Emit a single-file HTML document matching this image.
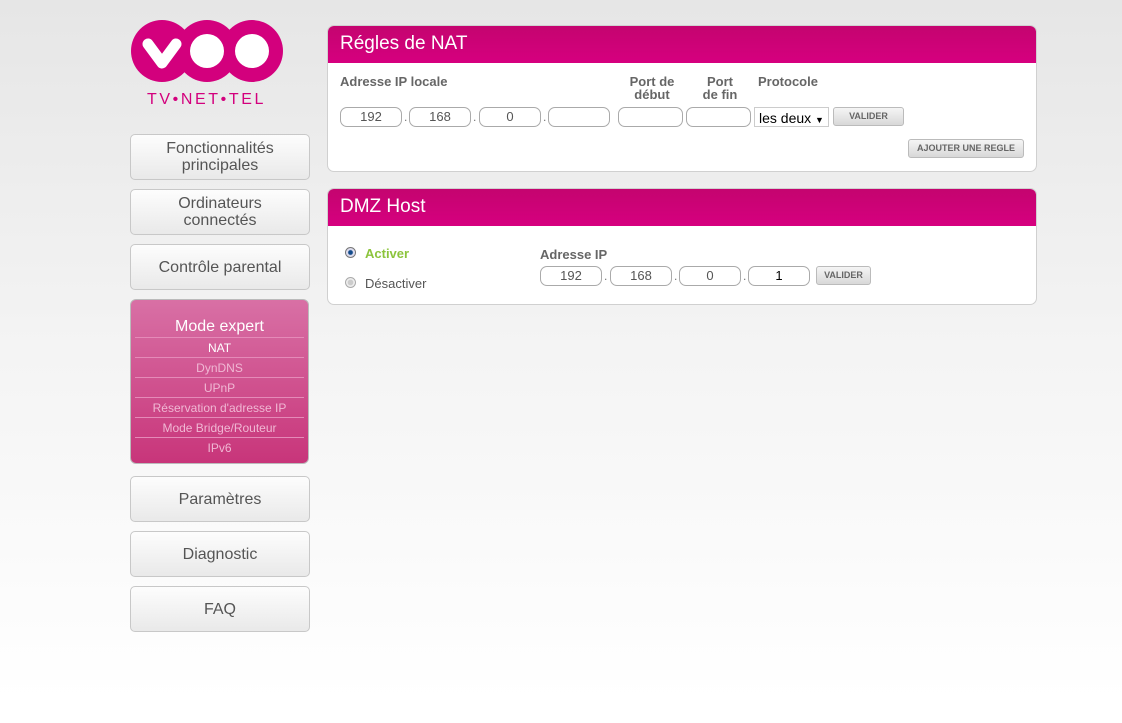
<!DOCTYPE html>
<html><head><meta charset="utf-8"><style>
*{box-sizing:border-box;margin:0;padding:0}
body{width:1122px;height:723px;overflow:hidden;font-family:"Liberation Sans",Arial,sans-serif;background:linear-gradient(#e6e6e6 0,#f4f4f4 350px,#fff 700px);position:relative}
.a{position:absolute}
.nav{position:absolute;left:130px;width:180px;height:46px;border:1px solid #c8c8c8;border-radius:5px;background:linear-gradient(#fdfdfd,#e9e9e9);color:#555;font-size:16px;text-align:center;display:flex;align-items:center;justify-content:center;line-height:17px}
.me{position:absolute;left:130px;top:299px;width:179px;height:165px;border-radius:6px;background:linear-gradient(#d870a5,#c8357a);border:1px solid #bbb;text-align:center;color:#f0b8d4;font-size:12px}
.me div{height:20px;line-height:20px;border-top:1px solid #e58ab8;margin:0 4px}
.panel{position:absolute;left:327px;width:710px;background:#fff;border:1px solid #d0d0d0;border-radius:7px;overflow:hidden}
.hd{height:37px;background:linear-gradient(#c4046f,#d6007f);color:#fff;font-size:19px;padding:7px 12px}
.lb{position:absolute;color:#666;font-weight:bold;font-size:13px;text-align:center;line-height:13px}
.in{position:absolute;height:20px;border:1px solid #aaa;border-radius:7px;background:#fff;font-size:13px;color:#555;text-align:center;line-height:18px}
.dot{position:absolute;font-size:12px;color:#777}
.btn{position:absolute;height:19px;border:1px solid #bbb;border-radius:3px;background:linear-gradient(#f5f5f5,#d8d8d8);font-size:9px;font-weight:bold;color:#666;text-align:center;line-height:17px}
</style></head><body>
<svg class="a" style="left:128px;top:18px" width="158" height="68" viewBox="0 0 158 68">
<g fill="#d3007d"><circle cx="34" cy="33" r="31"/><circle cx="79" cy="33" r="31"/><circle cx="124" cy="33" r="31"/></g>
<g fill="#fff"><circle cx="79" cy="33" r="17"/><circle cx="124" cy="33" r="17"/></g>
<path d="M20 26 L34 45 L48 26" stroke="#fff" stroke-width="11" fill="none" stroke-linecap="round" stroke-linejoin="round"/>
</svg>
<div class="a" style="left:147px;top:91px;color:#d3007d;font-size:16px;letter-spacing:2.6px">TV•NET•TEL</div>
<div class="nav" style="top:134px">Fonctionnalités<br>principales</div>
<div class="nav" style="top:189px">Ordinateurs<br>connectés</div>
<div class="nav" style="top:244px">Contrôle parental</div>
<div class="me"><p style="color:#fff;font-size:16px;padding-top:18px;height:37px">Mode expert</p>
<div style="color:#fff">NAT</div><div>DynDNS</div><div>UPnP</div><div>Réservation d'adresse IP</div><div>Mode Bridge/Routeur</div><div>IPv6</div></div>
<div class="nav" style="top:476px">Paramètres</div>
<div class="nav" style="top:531px">Diagnostic</div>
<div class="nav" style="top:586px">FAQ</div>

<div class="panel" style="top:25px;height:147px"><div class="hd">Régles de NAT</div></div>
<div class="lb" style="left:340px;top:75px">Adresse IP locale</div>
<div class="lb" style="left:622px;top:75px;width:60px">Port de<br>début</div>
<div class="lb" style="left:690px;top:75px;width:60px">Port<br>de fin</div>
<div class="lb" style="left:758px;top:75px">Protocole</div>
<div class="in" style="left:340px;top:107px;width:62px">192</div><div class="dot" style="left:404px;top:110px">.</div>
<div class="in" style="left:409px;top:107px;width:62px">168</div><div class="dot" style="left:473px;top:110px">.</div>
<div class="in" style="left:479px;top:107px;width:62px">0</div><div class="dot" style="left:543px;top:110px">.</div>
<div class="in" style="left:548px;top:107px;width:62px"></div>
<div class="in" style="left:618px;top:107px;width:65px"></div>
<div class="in" style="left:686px;top:107px;width:65px"></div>
<div class="a" style="left:754px;top:107px;width:75px;height:20px;border:1px solid #ccc;background:#fff;font-size:14px;padding:2px 4px;color:#000">les deux <span style="font-size:9px">▼</span></div>
<div class="btn" style="left:833px;top:107px;width:71px">VALIDER</div>
<div class="btn" style="left:908px;top:139px;width:116px">AJOUTER UNE REGLE</div>

<div class="panel" style="top:188px;height:117px"><div class="hd">DMZ Host</div></div>
<div class="a" style="left:345px;top:247px;width:11px;height:11px;border-radius:50%;border:1px solid #777;background:radial-gradient(#124a8a 30%,#dde 45%)"></div>
<div class="a" style="left:365px;top:246px;color:#8cc43c;font-weight:bold;font-size:13px">Activer</div>
<div class="a" style="left:345px;top:277px;width:11px;height:11px;border-radius:50%;border:1px solid #aaa;background:radial-gradient(#ccc 40%,#eee 50%)"></div>
<div class="a" style="left:365px;top:276px;color:#555;font-size:13px">Désactiver</div>
<div class="lb" style="left:540px;top:248px">Adresse IP</div>
<div class="in" style="left:540px;top:266px;width:62px">192</div><div class="dot" style="left:604px;top:269px">.</div>
<div class="in" style="left:610px;top:266px;width:62px">168</div><div class="dot" style="left:674px;top:269px">.</div>
<div class="in" style="left:679px;top:266px;width:62px">0</div><div class="dot" style="left:743px;top:269px">.</div>
<div class="in" style="left:748px;top:266px;width:62px;color:#000">1</div>
<div class="btn" style="left:816px;top:266px;width:55px">VALIDER</div>
</body></html>
